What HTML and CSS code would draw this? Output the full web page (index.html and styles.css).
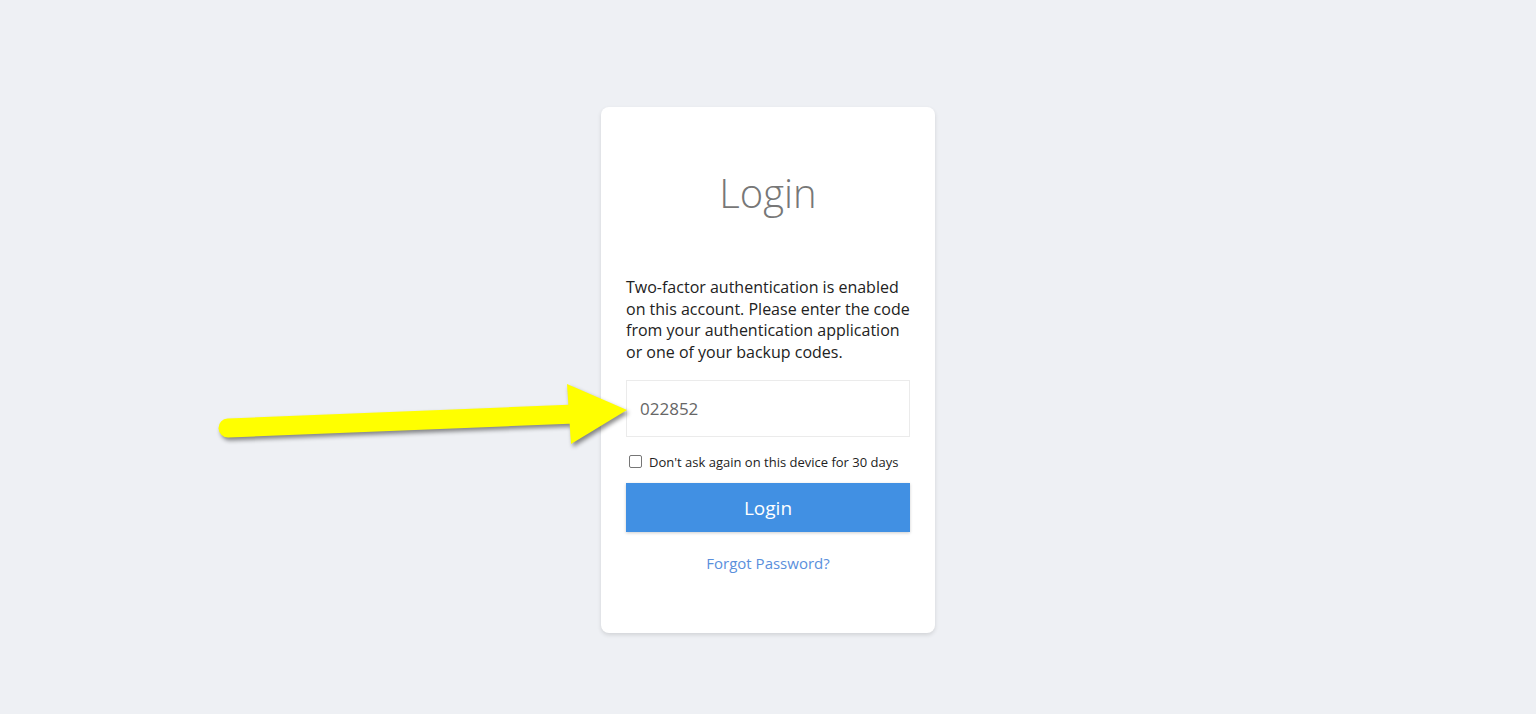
FILE: index.html
```html
<!DOCTYPE html>
<html lang="en">
<head>
<meta charset="utf-8">
<title>Login</title>
<link rel="stylesheet" href="styles.css">
</head>
<body>
<main class="page">
  <section class="card">
    <h1 class="title">Login</h1>
    <p class="intro">Two-factor authentication is enabled on this account. Please enter the code from your authentication application or one of your backup codes.</p>
    <div class="code-field">022852</div>
    <label class="remember"><span class="box"></span>Don't ask again on this device for 30 days</label>
    <div class="btn">Login</div>
    <a class="forgot" href="#">Forgot Password?</a>
  </section>
</main>
<svg class="arrow" width="700" height="470" viewBox="0 0 700 470" xmlns="http://www.w3.org/2000/svg">
  <g class="arrow-shape">
    <line x1="228" y1="428" x2="575" y2="414" stroke="#ffff00" stroke-width="19" stroke-linecap="round"/>
    <polygon points="567,384 627,410 571,444" fill="#ffff00"/>
  </g>
</svg>
</body>
</html>
```
FILE: styles.css
```css
html, body {
  margin: 0;
  padding: 0;
}
body {
  background: #eef0f4;
  font-family: "Open Sans", "Liberation Sans", sans-serif;
  height: 714px;
  overflow: hidden;
  position: relative;
}
.page {
  display: flex;
  justify-content: center;
  padding-top: 107px;
}
.card {
  width: 334px;
  box-sizing: border-box;
  background: #ffffff;
  border-radius: 8px;
  box-shadow: 0 2px 4px rgba(0, 0, 0, 0.12);
  padding: 61px 25px 60px;
  display: flex;
  flex-direction: column;
}
.title {
  margin: 0;
  font-size: 40px;
  line-height: 50px;
  font-weight: 300;
  color: #777777;
  text-align: center;
}
.intro {
  margin: 59px 0 0;
  font-size: 16px;
  line-height: 21.5px;
  color: #222222;
}
.code-field {
  margin-top: 17px;
  height: 57px;
  box-sizing: border-box;
  border: 1px solid #ebebeb;
  padding-left: 13px;
  display: flex;
  align-items: center;
  font-size: 17px;
  color: #666666;
}
.remember {
  margin-top: 15px;
  display: flex;
  align-items: center;
  font-size: 13px;
  line-height: 20px;
  color: #222222;
}
.box {
  width: 11px;
  height: 11px;
  border: 1px solid #767676;
  border-radius: 2px;
  margin: 0 7px 0 3px;
  position: relative;
  top: -1px;
  background: #fff;
}
.btn {
  margin-top: 11px;
  height: 49px;
  background: #4190e3;
  color: #ffffff;
  font-size: 19px;
  display: flex;
  align-items: center;
  justify-content: center;
  box-shadow: 0 1px 3px rgba(0, 0, 0, 0.2);
}
.forgot {
  margin-top: 21px;
  text-align: center;
  font-size: 15px;
  line-height: 20px;
  color: #5a8fdc;
  text-decoration: none;
}
.arrow {
  position: absolute;
  left: 0;
  top: 0;
  pointer-events: none;
}
.arrow-shape {
  filter: drop-shadow(2px 3px 2px rgba(0, 0, 0, 0.45));
}
```
